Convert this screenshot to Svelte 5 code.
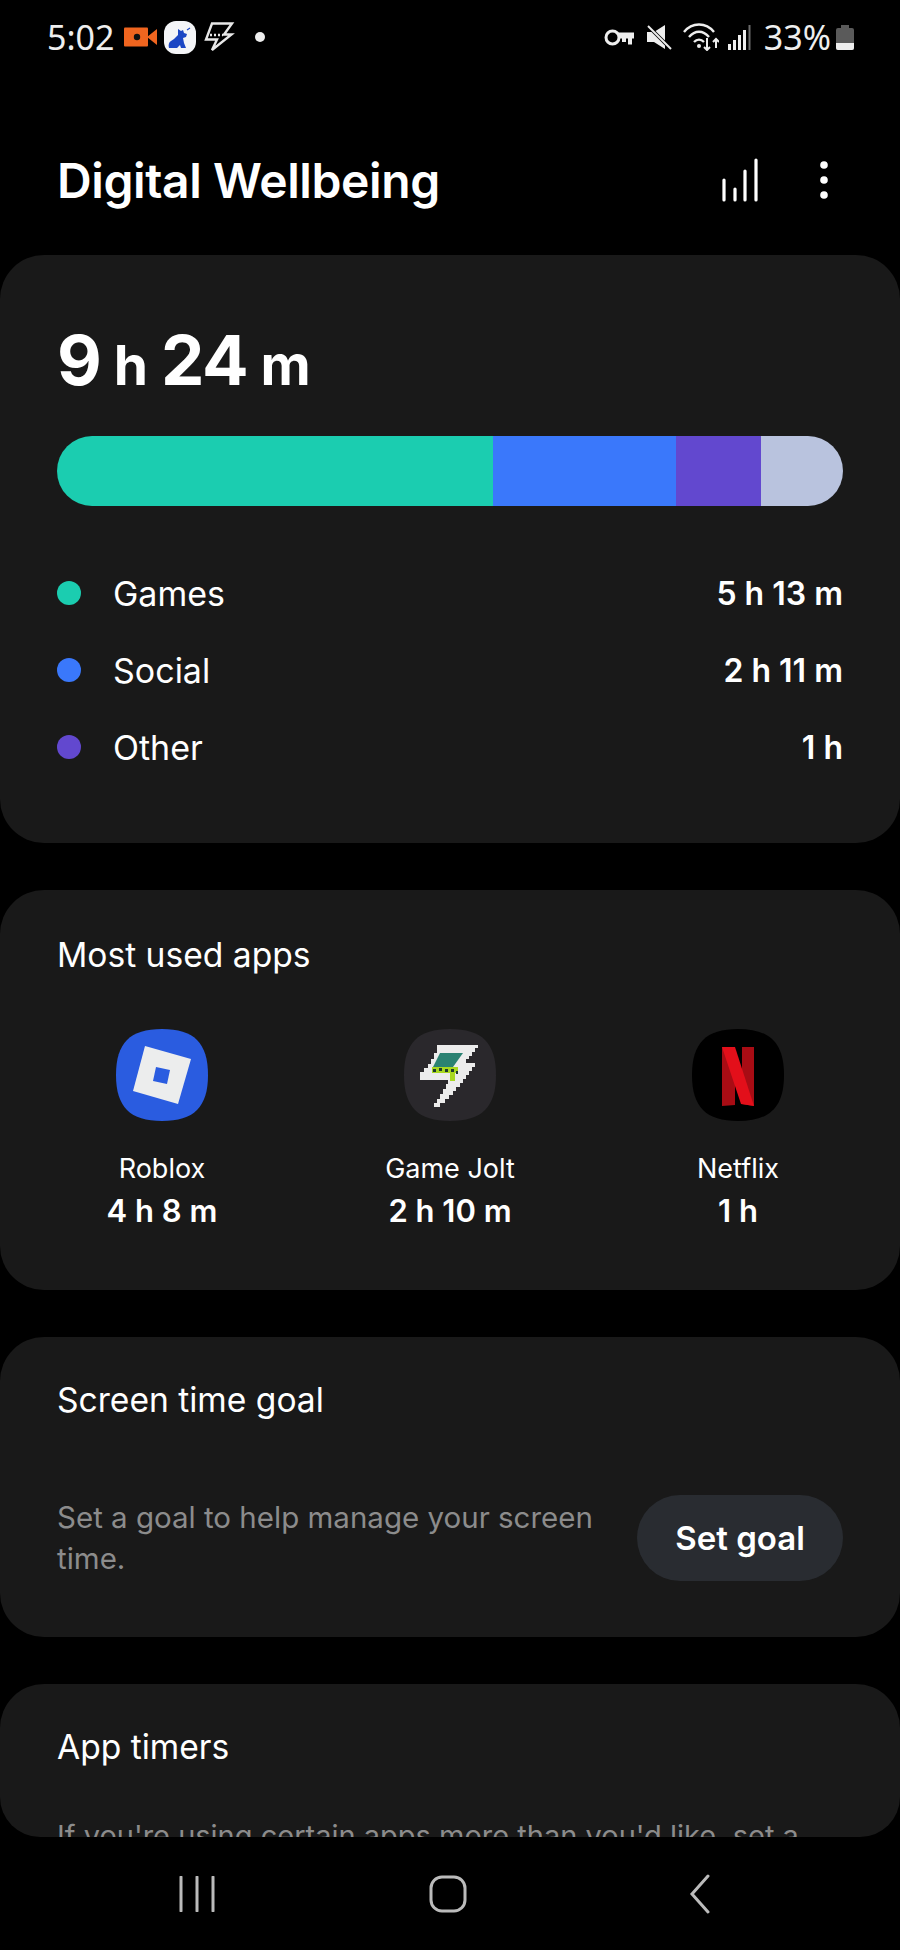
<script>
  const legend = [
    { name: 'Games', time: '5 h 13 m', color: '#1bcdb0' },
    { name: 'Social', time: '2 h 11 m', color: '#3a78fb' },
    { name: 'Other', time: '1 h', color: '#6248cf' }
  ];
  const segments = [
    { color: '#1bcdb0', width: 436 },
    { color: '#3a78fb', width: 183 },
    { color: '#6248cf', width: 85 },
    { color: '#b9c3de', width: 82 }
  ];
  // squircle shared by the three launcher icons
  const squircle = 'M46 0C78 0 92 14 92 46S78 92 46 92 0 78 0 46 14 0 46 0Z';
</script>

<div class="phone">
  <div class="status">
    <div class="status-left">
      <span class="clock">5:02</span>
      <svg class="video" width="33" height="20" viewBox="0 0 33 20">
        <rect y="0.500" width="24" height="19" rx="1" fill="#f0651f" />
        <path d="M23 10 33 2V18Z" fill="#f0651f" />
        <circle cx="13" cy="10" r="3.200" fill="#111" />
      </svg>
      <svg class="dog" width="32" height="33" viewBox="0 0 32 33">
        <rect width="32" height="33" rx="12" fill="#f4f5f7" />
        <path d="M5 27C4 24 5 21 7 20L10 18 14 14 14 8 17 10 19 9 20 12 23 13 22 16 19 17 20 22 22 27H17L16 24 13 27Z" fill="#1c47c4" />
        <path d="M23 9 26 7" stroke="#1c47c4" stroke-width="1.200" fill="none" />
      </svg>
      <svg class="bolt" width="31" height="30" viewBox="0 0 31 30">
        <path d="M8 1.500H28L20 12.500H27.500L8 28 13 17.500H2Z" fill="none" stroke="#e8e8e8" stroke-width="2.400" />
        <path d="M6 13H19" stroke="#e8e8e8" stroke-width="2.400" stroke-dasharray="2 2" />
      </svg>
      <span class="dot"></span>
    </div>
    <div class="status-right">
      <svg width="30" height="17" viewBox="0 0 30 17">
        <circle cx="8.500" cy="8.500" r="6.500" fill="none" stroke="#eee" stroke-width="3" />
        <path d="M14 3.500H30V9.500H28V15.500H24V9.500H22V13H18V9.500H14Z" fill="#eee" />
      </svg>
      <svg class="mute" width="25" height="25" viewBox="0 0 25 25">
        <path d="M0 7H7L18 0V24L7 17H0Z" fill="#eee" />
        <path d="M1 1 24 24" stroke="#000" stroke-width="3.600" />
        <path d="M1 1 24 24" stroke="#eee" stroke-width="2" />
      </svg>
      <svg class="wifi" width="36" height="28" viewBox="0 0 36 28">
        <path d="M1 9C9-1 23-1 31 9M6 14C12 7 20 7 26 14M11 19C14 16 18 16 21 19" fill="none" stroke="#eee" stroke-width="2.400" />
        <circle cx="16" cy="23" r="2" fill="#eee" />
        <path d="M24 15V27M21 24l3 3 3-3M33 25V16M30 19l3-3 3 3" fill="none" stroke="#eee" stroke-width="2" />
      </svg>
      <svg class="signal" width="23" height="25" viewBox="0 0 23 25">
        <path d="M1.500 25V19M6.500 25V15M11.500 25V10M16.500 25V5" stroke="#eee" stroke-width="3" />
        <path d="M21.500 25V0" stroke="#6c6c6c" stroke-width="2" />
      </svg>
      <span class="pct">33%</span>
      <svg class="battery" width="18" height="25" viewBox="0 0 18 25">
        <path d="M5 0h8v3h3a2 2 0 0 1 2 2v18a2 2 0 0 1-2 2H2a2 2 0 0 1-2-2V5a2 2 0 0 1 2-2h3Z" fill="#5a5a5a" />
        <path d="M0 18h18v5a2 2 0 0 1-2 2H2a2 2 0 0 1-2-2Z" fill="#eee" />
      </svg>
    </div>
  </div>

  <header class="top">
    <h1>Digital Wellbeing</h1>
    <div class="actions">
      <svg width="36" height="44" viewBox="0 0 36 44">
        <path d="M2 42V22M13 42V31M23 42V13M34 42V2" stroke="#fff" stroke-width="3.200" stroke-linecap="round" />
      </svg>
      <svg width="10" height="42" viewBox="0 0 10 42">
        <circle cx="5" cy="6" r="3.800" fill="#fff" />
        <circle cx="5" cy="21" r="3.800" fill="#fff" />
        <circle cx="5" cy="36" r="3.800" fill="#fff" />
      </svg>
    </div>
  </header>

  <main class="scroller">
    <section class="card usage">
      <div class="total"><b>9</b> h <b>24</b> m</div>
      <div class="bar">
        {#each segments as s}
          <span style="width: {s.width}px; background: {s.color}"></span>
        {/each}
      </div>
      <ul class="legend">
        {#each legend as row}
          <li>
            <span class="swatch" style="background: {row.color}"></span>
            <span class="name">{row.name}</span>
            <span class="time">{row.time}</span>
          </li>
        {/each}
      </ul>
    </section>

    <section class="card apps">
      <h2>Most used apps</h2>
      <div class="app-row">
        <div class="app">
          <svg width="92" height="92" viewBox="0 0 92 92">
            <path d={squircle} fill="#2a5ce0" />
            <path d="M29 17 75 30 62 75 17 62Z" fill="#eceded" />
            <path d="M40 38 54 41 51 55 37 52Z" fill="#2a5ce0" />
          </svg>
          <span class="app-name">Roblox</span>
          <span class="app-time">4 h 8 m</span>
        </div>
        <div class="app">
          <svg width="92" height="92" viewBox="0 0 92 92">
            <path d={squircle} fill="#2a282c" />
            <path d="M33 16H74V19H71V23H68V27H65V30H62V34H71V38H68V42H65V46H62V50H59V54H56V58H52V62H49V66H45V70H41V74H36V78H30V74H33V70H36V65H39V60H42V55H44V51H16V43H20V39H24V35H27V30H30V24H33Z" fill="#ececec" />
            <path d="M36 24H59L49 38H29Z" fill="#2b8272" />
            <path d="M28 38H54V44H51V52H46V44H28Z" fill="#a8d820" />
            <path d="M29 40h3v3h-3zM35 39h3v3h-3zM41 40h3v3h-3zM47 40h3v3h-3zM52 42h2v3h-2z" fill="#1d3a2c" />
          </svg>
          <span class="app-name">Game Jolt</span>
          <span class="app-time">2 h 10 m</span>
        </div>
        <div class="app">
          <svg width="92" height="92" viewBox="0 0 92 92">
            <path d={squircle} fill="#000" />
            <path d="M30 18H43V76L30 77Z" fill="#a80c14" />
            <path d="M50 18H62V77L50 75Z" fill="#a80c14" />
            <path d="M30 18H43L62 77 49 75Z" fill="#e30f1a" />
          </svg>
          <span class="app-name">Netflix</span>
          <span class="app-time">1 h</span>
        </div>
      </div>
    </section>

    <section class="card goal">
      <h2>Screen time goal</h2>
      <div class="goal-row">
        <p>Set a goal to help manage your screen time.</p>
        <button type="button">Set goal</button>
      </div>
    </section>

    <section class="card timers">
      <h2>App timers</h2>
      <p>If you're using certain apps more than you'd like, set a daily timer for them.</p>
    </section>
  </main>

  <nav class="softkeys">
    <svg width="38" height="36" viewBox="0 0 38 36">
      <path d="M3 1V35M19 1V35M35 1V35" stroke="#bbb" stroke-width="3" stroke-linecap="round" />
    </svg>
    <svg class="home" width="38" height="38" viewBox="0 0 38 38">
      <rect x="2" y="2" width="34" height="34" rx="11" fill="none" stroke="#bbb" stroke-width="3" />
    </svg>
    <svg width="24" height="40" viewBox="0 0 24 40">
      <path d="M20 2 4 20 20 38" fill="none" stroke="#bbb" stroke-width="3" stroke-linecap="round" />
    </svg>
  </nav>
</div>

<style>
  :global(body) {
    margin: 0;
    background: #000;
  }

  .phone {
    width: 900px;
    height: 1950px;
    display: flex;
    flex-direction: column;
    background: #000;
    color: #fff;
    font-family: Inter, 'Noto Sans', sans-serif;
    overflow: hidden;
  }

  .status {
    height: 74px;
    flex: none;
    box-sizing: border-box;
    padding: 0 46px 0 47px;
    display: flex;
    align-items: center;
    justify-content: space-between;
  }

  .status-left,
  .status-right {
    display: flex;
    align-items: center;
  }

  .clock,
  .pct {
    font-family: 'Noto Sans', sans-serif;
    font-size: 34px;
    color: #eee;
  }

  .video {
    margin-left: 10px;
  }

  .dog {
    margin-left: 7px;
  }

  .bolt {
    margin-left: 8px;
  }

  .dot {
    width: 10px;
    height: 10px;
    border-radius: 50%;
    background: #eee;
    margin-left: 20px;
  }

  .mute {
    margin-left: 13px;
  }

  .wifi {
    margin-left: 11px;
  }

  .signal {
    margin-left: 9px;
  }

  .pct {
    margin-left: 13px;
  }

  .battery {
    margin-left: 5px;
  }

  .top {
    height: 181px;
    flex: none;
    box-sizing: border-box;
    padding: 31px 71px 0 57px;
    display: flex;
    align-items: center;
    justify-content: space-between;
  }

  h1 {
    margin: 0;
    font-size: 48px;
    font-weight: 600;
    letter-spacing: -0.4px;
  }

  .actions {
    display: flex;
    align-items: center;
    gap: 61px;
  }

  .scroller {
    height: 1582px;
    flex: none;
    overflow: hidden;
    display: flex;
    flex-direction: column;
    gap: 47px;
    border-radius: 0 0 40px 40px;
  }

  .card {
    flex: none;
    box-sizing: border-box;
    background: #191919;
    border-radius: 44px;
    padding: 0 57px;
  }

  .usage {
    height: 588px;
    padding-top: 68px;
  }

  .total {
    font-size: 55px;
    font-weight: 700;
    line-height: 74px;
    height: 113px;
  }

  .total b {
    font-size: 69px;
    font-weight: 700;
    letter-spacing: -1.200px;
  }

  .bar {
    display: flex;
    height: 70px;
    border-radius: 35px;
    overflow: hidden;
  }

  .legend {
    list-style: none;
    margin: 65px 0 0;
    padding: 0;
    display: flex;
    flex-direction: column;
    gap: 33px;
  }

  .legend li {
    display: flex;
    align-items: center;
    height: 44px;
  }

  .swatch {
    width: 24px;
    height: 24px;
    border-radius: 50%;
    margin-right: 32px;
  }

  .name {
    flex: 1;
    font-size: 34px;
  }

  .time {
    font-size: 32px;
    font-weight: 600;
  }

  h2 {
    margin: 0;
    font-size: 33.600px;
    font-weight: 400;
  }

  .apps {
    height: 400px;
    padding-top: 44px;
  }

  .app-row {
    margin: 54px -39px 0;
    display: grid;
    grid-template-columns: repeat(3, 1fr);
  }

  .app {
    display: flex;
    flex-direction: column;
    align-items: center;
  }

  .app-name {
    margin-top: 31px;
    font-size: 27px;
  }

  .app-time {
    margin-top: 7px;
    font-size: 31px;
    font-weight: 600;
  }

  .goal {
    height: 300px;
    padding-top: 42px;
  }

  .goal-row {
    margin-top: 75px;
    display: flex;
    align-items: center;
    justify-content: space-between;
  }

  .goal-row p,
  .timers p {
    margin: 0;
    font-size: 29.500px;
    line-height: 41px;
    color: #8c8c8c;
  }

  .goal-row p {
    width: 560px;
  }

  button {
    width: 206px;
    height: 86px;
    border: none;
    border-radius: 43px;
    background: #292c31;
    color: #fff;
    font: 600 33px Inter, 'Noto Sans', sans-serif;
  }

  .timers {
    height: 400px;
    padding-top: 42px;
  }

  .timers p {
    margin-top: 48px;
    font-size: 29px;
  }

  .softkeys {
    flex: 1;
    box-sizing: border-box;
    padding-left: 178px;
    display: flex;
    align-items: center;
  }

  .home {
    margin: 0 221px 0 213px;
  }
</style>
